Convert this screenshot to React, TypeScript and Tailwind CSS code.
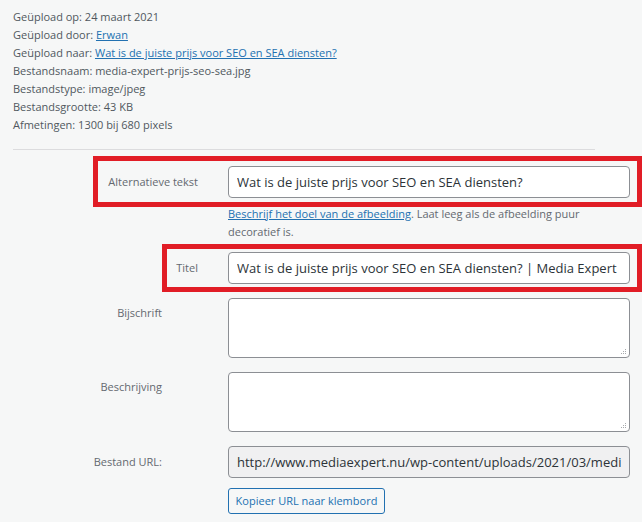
import React from "react";

const meta = [
  { label: "Geüpload op:", value: "24 maart 2021" },
  { label: "Geüpload door:", value: "Erwan", link: true },
  { label: "Geüpload naar:", value: "Wat is de juiste prijs voor SEO en SEA diensten?", link: true },
  { label: "Bestandsnaam:", value: "media-expert-prijs-seo-sea.jpg" },
  { label: "Bestandstype:", value: "image/jpeg" },
  { label: "Bestandsgrootte:", value: "43 KB" },
  { label: "Afmetingen:", value: "1300 bij 680 pixels" },
];

function Grip() {
  return (
    <svg className="pointer-events-none absolute bottom-[3px] right-[3px]" width="7" height="7" viewBox="0 0 7 7">
      <rect x="5" y="1" width="1" height="1" fill="#a7aaad" />
      <rect x="3" y="3" width="1" height="1" fill="#a7aaad" />
      <rect x="5" y="3" width="1" height="1" fill="#a7aaad" />
      <rect x="1" y="5" width="1" height="1" fill="#a7aaad" />
      <rect x="3" y="5" width="1" height="1" fill="#a7aaad" />
      <rect x="5" y="5" width="1" height="1" fill="#a7aaad" />
    </svg>
  );
}

export default function App() {
  const inputCls =
    "h-[32px] w-[402px] rounded-[4px] border border-[#8c8f94] bg-white px-[8px] text-[13px] text-[#2c3338] outline-none";

  return (
    <div className="h-[522px] w-[642px] overflow-hidden bg-[#f6f7f7] font-['Open_Sans',sans-serif]">
      {/* Details */}
      <div className="pl-[13px] pt-[8px] text-[11px] leading-[18px] text-[#50575e]">
        {meta.map((m) => (
          <div key={m.label} className="whitespace-nowrap">
            {m.label}{" "}
            {m.link ? (
              <span className="text-[#2271b1] underline">{m.value}</span>
            ) : (
              m.value
            )}
          </div>
        ))}
      </div>

      <div className="ml-[13px] mt-[15px] w-[582px] border-t border-[#dcdcde]" />

      {/* Alt text */}
      <div className="relative mt-[16px] flex items-center">
        <div className="w-[228px] pr-[30px] text-right text-[11px] text-[#646970]">Alternatieve tekst</div>
        <input className={inputCls} defaultValue="Wat is de juiste prijs voor SEO en SEA diensten?" />
        <div className="pointer-events-none absolute -top-[10px] left-[93px] h-[51px] w-[549px] border-[5px] border-[#e11d26]" />
      </div>
      <p className="ml-[228px] pt-[7px] text-[11px] leading-[18px] text-[#646970]">
        <span className="text-[#2271b1] underline">Beschrijf het doel van de afbeelding</span>. Laat leeg als de afbeelding puur
        <br />
        decoratief is.
      </p>

      {/* Title */}
      <div className="relative mt-[11px] flex items-center">
        <div className="w-[228px] pr-[30px] text-right text-[11px] text-[#646970]">Titel</div>
        <input className={inputCls} defaultValue="Wat is de juiste prijs voor SEO en SEA diensten? | Media Expert" />
        <div className="pointer-events-none absolute -top-[8px] left-[162px] h-[48px] w-[480px] border-[5px] border-[#e11d26]" />
      </div>

      {/* Caption */}
      <div className="mt-[14px] flex items-start">
        <div className="w-[228px] pr-[66px] pt-[6px] text-right text-[11px] leading-[18px] text-[#646970]">Bijschrift</div>
        <div className="relative">
          <textarea className="block h-[60px] w-[402px] resize-none rounded-[4px] border border-[#8c8f94] bg-white outline-none" />
          <Grip />
        </div>
      </div>

      {/* Description */}
      <div className="mt-[14px] flex items-start">
        <div className="w-[228px] pr-[66px] pt-[6px] text-right text-[11px] leading-[18px] text-[#646970]">Beschrijving</div>
        <div className="relative">
          <textarea className="block h-[60px] w-[402px] resize-none rounded-[4px] border border-[#8c8f94] bg-white outline-none" />
          <Grip />
        </div>
      </div>

      {/* File URL */}
      <div className="mt-[14px] flex items-center">
        <div className="w-[228px] pr-[66px] text-right text-[11px] text-[#646970]">Bestand URL:</div>
        <input
          readOnly
          className="h-[32px] w-[402px] rounded-[4px] border border-[#8c8f94] bg-[#f0f0f1] px-[8px] text-[13px] text-[#2c3338] outline-none"
          defaultValue="http://www.mediaexpert.nu/wp-content/uploads/2021/03/media-expert-prijs-seo-sea.jpg"
        />
      </div>

      <div className="ml-[228px] mt-[9px]">
        <button className="h-[26px] w-[157px] rounded-[3px] border border-[#2271b1] bg-[#f6f7f7] text-[11px] text-[#2271b1]">
          Kopieer URL naar klembord
        </button>
      </div>
    </div>
  );
}
